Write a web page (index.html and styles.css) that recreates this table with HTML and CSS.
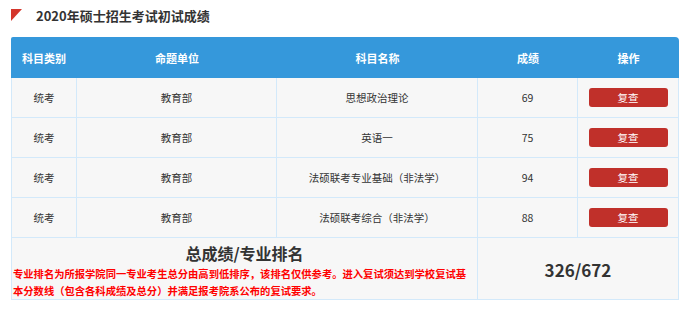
FILE: index.html
```html
<!DOCTYPE html>
<html lang="zh">
<head>
<meta charset="utf-8">
<link rel="stylesheet" href="styles.css">
</head>
<body>
<div class="page">
  <div class="title">
    <svg class="flag" width="11" height="12" viewBox="0 0 11 12"><polygon points="0,0 11,0 0,12" fill="#d4362c"/></svg>
    <span>2020年硕士招生考试初试成绩</span>
  </div>
  <table class="scores">
    <colgroup>
      <col class="c1"><col class="c2"><col class="c3"><col class="c4"><col class="c5">
    </colgroup>
    <thead>
      <tr><th>科目类别</th><th>命题单位</th><th>科目名称</th><th>成绩</th><th>操作</th></tr>
    </thead>
    <tbody>
      <tr><td>统考</td><td>教育部</td><td>思想政治理论</td><td>69</td><td><button class="btn">复查</button></td></tr>
      <tr><td>统考</td><td>教育部</td><td>英语一</td><td>75</td><td><button class="btn">复查</button></td></tr>
      <tr><td>统考</td><td>教育部</td><td>法硕联考专业基础（非法学）</td><td>94</td><td><button class="btn">复查</button></td></tr>
      <tr><td>统考</td><td>教育部</td><td>法硕联考综合（非法学）</td><td>88</td><td><button class="btn">复查</button></td></tr>
      <tr class="summary">
        <td colspan="3" class="sum-left">
          <div class="sum-title">总成绩/专业排名</div>
          <div class="note">专业排名为所报学院同一专业考生总分由高到低排序，该排名仅供参考。进入复试须达到学校复试基本分数线（包含各科成绩及总分）并满足报考院系公布的复试要求。</div>
        </td>
        <td colspan="2" class="sum-right">326/672</td>
      </tr>
    </tbody>
  </table>
</div>
</body>
</html>
```
FILE: styles.css
```css
html, body {
  margin: 0;
  padding: 0;
  background: #fff;
}
body {
  font-family: "Noto Sans CJK SC", "Open Sans", sans-serif;
  color: #333;
}
.page {
  padding: 0 0 0 11px;
}
.title {
  display: flex;
  align-items: center;
  height: 31px;
}
.flag {
  display: block;
  margin-top: -1px;
}
.title span {
  margin-left: 14px;
  font-size: 13px;
  font-weight: bold;
  color: #333;
  line-height: 31px;
}
.scores {
  margin-top: 6px;
  width: 668px;
  border-collapse: separate;
  border-spacing: 0;
  table-layout: fixed;
}
.c1 { width: 66px; }
.c2 { width: 200px; }
.c3 { width: 201px; }
.c4 { width: 100px; }
.c5 { width: 101px; }
.scores th {
  background: #3598db;
  color: #fff;
  font-size: 11px;
  font-weight: bold;
  height: 41px;
  padding: 0;
  text-align: center;
}
.scores th:first-child { border-top-left-radius: 2px; }
.scores th:last-child { border-top-right-radius: 4px; }
.scores td {
  background: #f7f7f7;
  font-size: 10.5px;
  text-align: center;
  height: 39px;
  padding: 0;
  border-right: 1px solid #d3e9fa;
  border-bottom: 1px solid #d3e9fa;
}
.scores td:first-child { border-left: 1px solid #d3e9fa; }
.btn {
  display: block;
  margin: 0 auto;
  width: 79px;
  height: 19px;
  border: none;
  border-radius: 3px;
  background: #c0302a;
  color: #fff;
  font-family: "Noto Sans CJK SC", sans-serif;
  font-size: 10.5px;
  padding: 0;
  line-height: 19px;
}
.summary td { height: auto; }
.scores td.sum-left {
  padding: 3px 1px 0 1px;
  text-align: left;
  vertical-align: top;
}
.sum-title {
  text-align: center;
  font-size: 16px;
  font-weight: bold;
  line-height: 24px;
  color: #333;
}
.note {
  color: #f00;
  font-size: 10.3px;
  font-weight: bold;
  line-height: 17px;
}
.scores td.sum-right {
  font-size: 17px;
  font-weight: bold;
  color: #333;
  vertical-align: middle;
  padding-top: 2px;
}
```
